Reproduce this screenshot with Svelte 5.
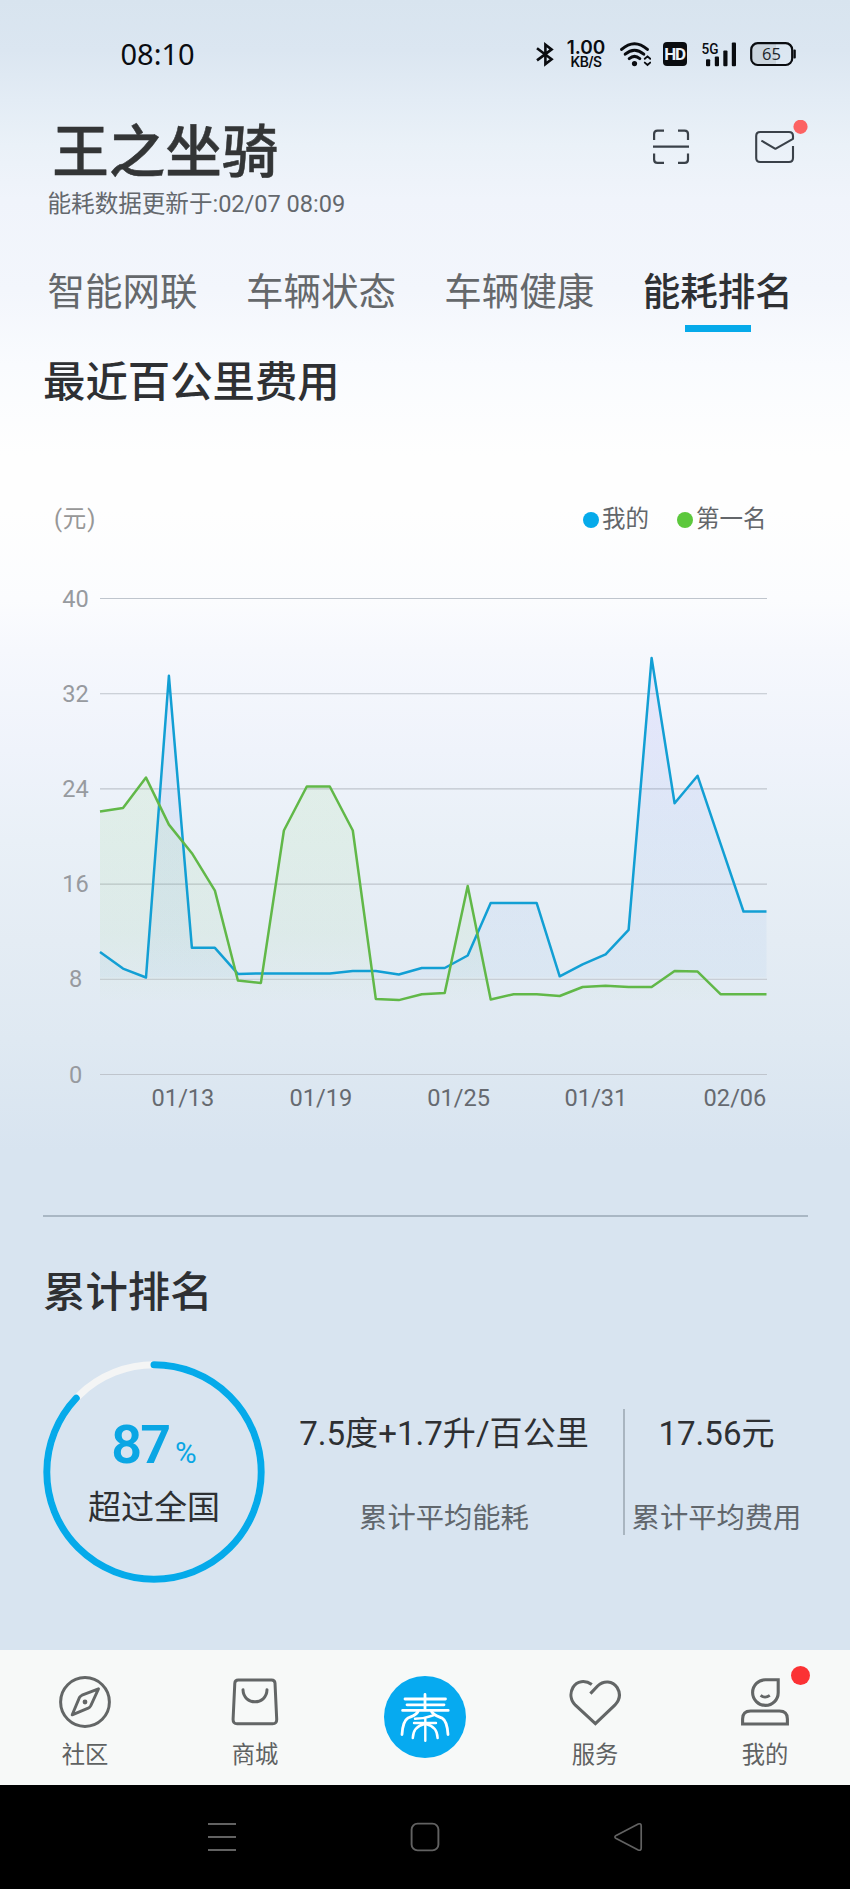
<script>
  const tabs = ['智能网联', '车辆状态', '车辆健康', '能耗排名'];
  const activeTab = '能耗排名';

  const mine = [10.3, 8.9, 8.15, 33.5, 10.65, 10.65, 8.45, 8.5, 8.5, 8.5, 8.5, 8.7, 8.7, 8.4, 8.95, 8.95, 10, 14.4, 14.4, 14.4, 8.25, 9.25, 10.1, 12.15, 35, 22.8, 25.1, 19.4, 13.7, 13.7];
  const best = [22.1, 22.4, 24.95, 21, 18.6, 15.45, 7.9, 7.7, 20.5, 24.2, 24.2, 20.5, 6.35, 6.25, 6.75, 6.85, 15.85, 6.3, 6.75, 6.75, 6.6, 7.35, 7.45, 7.35, 7.35, 8.7, 8.65, 6.75, 6.75, 6.75];

  const left = 100;
  const right = 766.5;
  const zeroY = 540.5;
  const unit = 11.9;
  const px = (i) => left + (i * (right - left)) / 29;
  const py = (v) => zeroY - v * unit;
  const line = (s) => s.map((v, i) => `${i ? 'L' : 'M'}${px(i).toFixed(1)} ${py(v).toFixed(1)}`).join('');
  const area = (s) => {
    const base = py(Math.min(...s)).toFixed(1);
    return `${line(s)}V${base}H${left}Z`;
  };

  const ticks = [40, 32, 24, 16, 8, 0];
  const dates = [
    { label: '01/13', x: 183 },
    { label: '01/19', x: 320.8 },
    { label: '01/25', x: 458.7 },
    { label: '01/31', x: 596 },
    { label: '02/06', x: 735 }
  ];

  const radius = 107.2;
  const percent = 87;
  const circumference = 2 * Math.PI * radius;
</script>

<div class="screen">
  <div class="status">
    <span class="time">08:10</span>
    <div class="sys">
      <svg width="18" height="26" viewBox="0 0 18 26" fill="none" stroke="#0a0c10" stroke-width="2.6" stroke-linejoin="miter">
        <path d="M1 7.2 L15.6 18.2 L9.4 23 V3.6 L15.6 8.4 L1 19.4" />
      </svg>
      <div class="speed"><b>1.00</b><i>KB/S</i></div>
      <svg class="wifi" width="31" height="26" viewBox="0 0 31 26" fill="none" stroke="#0a0c10" stroke-width="3" stroke-linecap="round">
        <path d="M1.6 8.4 Q14.5 -2.8 27.4 8.4" />
        <path d="M5.2 13.2 Q14.5 5.2 23.8 13.2" />
        <path d="M9.2 17.6 Q14.5 13.2 19.8 17.6" />
        <circle cx="14.5" cy="22.6" r="2.6" fill="#0a0c10" stroke="none" />
        <path d="M24.8 17.8 L27.5 15.4 L30.2 17.8 M24.8 21.6 L27.5 24 L30.2 21.6" stroke-width="1.9" />
      </svg>
      <span class="hd">HD</span>
      <svg class="signal" width="34" height="26" viewBox="0 0 34 26" fill="#0a0c10">
        <text x="-0.5" y="12.8" font-size="15.5" font-weight="500" textLength="17" lengthAdjust="spacingAndGlyphs">5G</text>
        <rect x="4" y="18.3" width="4.2" height="6.9" rx="1" />
        <rect x="12.8" y="15.4" width="4.2" height="9.8" rx="1" />
        <rect x="21.3" y="9.6" width="4.2" height="15.6" rx="1" />
        <rect x="29.8" y="1.4" width="4.2" height="23.8" rx="1" />
      </svg>
      <svg class="battery" width="46" height="26" viewBox="0 0 46 26">
        <path d="M9 2 H26 V24 H9 A7 7 0 0 1 2 17 V9 A7 7 0 0 1 9 2Z" fill="#cbd5de" />
        <rect x="1.2" y="2.2" width="41" height="21.8" rx="6.5" fill="none" stroke="#0a0c10" stroke-width="2.2" />
        <rect x="43.4" y="8.6" width="2.4" height="9" rx="1" fill="#0a0c10" />
        <text x="21.5" y="19" font-size="16.5" text-anchor="middle" fill="#20252b">65</text>
      </svg>
    </div>
  </div>

  <header>
    <div class="names">
      <h1>王之坐骑</h1>
      <p>能耗数据更新于:02/07 08:09</p>
    </div>
    <div class="actions">
      <svg width="38" height="38" viewBox="0 0 38 38" fill="none" stroke="#3a4149" stroke-width="2.2">
        <path d="M2.1 12 V6 Q2.1 2.6 5.5 2.6 H12 M26 2.6 H32.6 Q36 2.6 36 6 V12 M36 25.4 V31.4 Q36 34.8 32.6 34.8 H26 M12 34.8 H5.5 Q2.1 34.8 2.1 31.4 V25.4 M1 18.6 H37" />
      </svg>
      <svg width="54" height="46" viewBox="0 0 54 46" fill="none" stroke="#3a4149" stroke-width="2.1" stroke-linejoin="round">
        <path d="M38 26 V38 Q38 42 34 42 H5.2 Q1.2 42 1.2 38 V16 Q1.2 12 5.2 12 H34 Q38 12 38 16 V18.8 L20.4 28.8 L6.4 20.6" />
        <circle cx="45.5" cy="6.8" r="7.1" fill="#fc6262" stroke="none" />
      </svg>
    </div>
  </header>

  <nav class="tabs">
    {#each tabs as tab}
      <div class="tab" class:active={tab === activeTab}>{tab}</div>
    {/each}
  </nav>

  <section class="cost">
    <h2>最近百公里费用</h2>
    <div class="legend">
      <span class="unit">(元)</span>
      <span class="key"><i class="blue"></i>我的</span>
      <span class="key"><i class="green"></i>第一名</span>
    </div>
    <svg class="chart" width="850" height="600" viewBox="0 0 850 600">
      <defs>
        <linearGradient id="fillMine" x1="0" y1="0" x2="0" y2="1">
          <stop offset="0" stop-color="#6a50f0" stop-opacity="0.1" />
          <stop offset="0.5" stop-color="#3f6ee0" stop-opacity="0.08" />
          <stop offset="1" stop-color="#3f8ee0" stop-opacity="0.05" />
        </linearGradient>
        <linearGradient id="fillBest" x1="0" y1="0" x2="0" y2="1">
          <stop offset="0" stop-color="#66c840" stop-opacity="0.09" />
          <stop offset="0.7" stop-color="#66c840" stop-opacity="0.06" />
          <stop offset="1" stop-color="#66c840" stop-opacity="0.01" />
        </linearGradient>
      </defs>
      {#each ticks as tick}
        <line x1={left} x2={right + 0.5} y1={py(tick)} y2={py(tick)} stroke="#bfc5cd" stroke-width="1.1" />
        <text x="75.6" y={py(tick) + 8} fill="#979a9f">{tick}</text>
      {/each}
      {#each dates as d}
        <text x={d.x} y="571.6" fill="#666a70">{d.label}</text>
      {/each}
      <path d={area(mine)} fill="url(#fillMine)" />
      <path d={area(best)} fill="url(#fillBest)" />
      <path d={line(mine)} class="stroke" stroke="#129fd4" />
      <path d={line(best)} class="stroke" stroke="#61b848" />
    </svg>
  </section>

  <section class="rank">
    <h2>累计排名</h2>
    <div class="stats">
      <div class="ring">
        <svg width="222" height="222" viewBox="-111 -111 222 222" fill="none" stroke-width="7">
          <circle r={radius} stroke="#f4f5f5" />
          <circle r={radius} stroke="#05aaea" stroke-linecap="round" transform="rotate(-90)" stroke-dasharray="{(circumference * percent) / 100} {circumference}" />
        </svg>
        <div class="score">
          <div class="pct"><strong>{percent}</strong><span>%</span></div>
          <div class="over">超过全国</div>
        </div>
      </div>
      <div class="stat energy">
        <div class="value">7.5度+1.7升/百公里</div>
        <div class="label">累计平均能耗</div>
      </div>
      <div class="stat fee">
        <div class="value">17.56元</div>
        <div class="label">累计平均费用</div>
      </div>
    </div>
  </section>

  <nav class="bottom">
    <div class="item">
      <svg width="54" height="54" viewBox="0 0 54 54" fill="none" stroke="#636666" stroke-width="3">
        <circle cx="27" cy="27" r="24.4" />
        <path d="M40.5 13.8 L24 20.2 Q22.4 21 21.4 22.6 L14.2 39.8 L30.2 33.2 Q31.8 32.4 32.8 30.6 Z" stroke-linejoin="round" stroke-width="2.9" />
        <circle cx="27" cy="27" r="2.4" fill="#636666" stroke="none" />
      </svg>
      <span>社区</span>
    </div>
    <div class="item">
      <svg width="54" height="54" viewBox="0 0 54 54" fill="none" stroke="#636666" stroke-width="3" stroke-linecap="round">
        <path d="M10.2 5 H43.6 Q46.8 5 47 8.2 L48.7 44 Q48.9 48.8 44.6 48.8 H9.2 Q4.9 48.8 5.1 44 L6.8 8.2 Q7 5 10.2 5Z" />
        <path d="M15 14.8 C15.4 30.8 38.6 30.8 39 14.8" />
      </svg>
      <span>商城</span>
    </div>
    <div class="item main">
      <svg width="82" height="82" viewBox="0 0 82 82" fill="none" stroke="#fff" stroke-width="2.8" stroke-linecap="round" stroke-linejoin="round">
        <circle cx="41" cy="41" r="41" fill="#06aaf0" stroke="none" />
        <path d="M21 23 H61.5 M23 28.8 H60 M18.6 34.4 H64.2 M41 18.4 V34" />
        <path d="M34 35.5 C32 39.5 28.5 40 24 42 Q18.8 45 18 58.5 M47.5 35.5 C50 39.5 53.5 40 58 42 Q63.2 45 64 58.5" />
        <path d="M50 39.2 Q41 42.6 31 42.8 M30 47 H52 M41.3 42 V64.8" stroke-width="2.4" />
        <path d="M40.5 48 Q29.2 50.5 28.8 62 M42 48 Q53.2 50.5 53.6 62" stroke-width="2.5" />
      </svg>
    </div>
    <div class="item">
      <svg width="54" height="54" viewBox="0 0 54 54" fill="none" stroke="#636666" stroke-width="3.1">
        <path d="M23.8 9.6 C17 4.6 8.8 6 5 12.4 C1.6 18.4 2.6 25.2 7.4 30.2 L27.4 48.6 L46.8 30.2 C51.8 24.8 52.6 18.2 49.2 12.6 C44.6 5.6 35.6 5.2 29.6 11 L22.4 18.6" stroke-linejoin="miter" />
      </svg>
      <span>服务</span>
    </div>
    <div class="item">
      <svg width="54" height="54" viewBox="0 0 54 54" fill="none" stroke="#636666" stroke-width="3.1">
        <path d="M27.6 4.8 H40.2 V17.4 A12.8 12.8 0 1 1 27.6 4.8Z" />
        <path d="M22.6 20.4 Q27 23.8 31.8 20.4" stroke-width="2.8" />
        <path d="M4.6 49 V44 Q4.6 36 12.6 36 H41.4 Q49.4 36 49.4 44 V49 Z" />
      </svg>
      <em></em>
      <span>我的</span>
    </div>
  </nav>

  <div class="keys">
    <svg width="30" height="30" viewBox="0 0 30 30" stroke="#626262" stroke-width="2.2"><path d="M1 2 H29 M1 15 H29 M1 28 H29" /></svg>
    <svg width="30" height="30" viewBox="0 0 30 30" fill="none" stroke="#626262" stroke-width="1.9"><rect x="1.6" y="1.6" width="26.8" height="26.8" rx="6" /></svg>
    <svg width="30" height="30" viewBox="0 0 30 30" fill="none" stroke="#626262" stroke-width="1.7"><path d="M3.2 13.4 L25.2 2 Q28.2 1 28.2 4 V26 Q28.2 29 25.2 28 L3.2 16.6 Q0.6 15 3.2 13.4Z" /></svg>
  </div>
</div>

<style>
  :global(body) {
    margin: 0;
  }
  .screen {
    width: 850px;
    height: 1889px;
    overflow: hidden;
    display: flex;
    flex-direction: column;
    font-family: Roboto, 'Noto Sans CJK SC', sans-serif;
    color: #2e3033;
    background: linear-gradient(
      #d8e4ef 0,
      #dbe6f1 50px,
      #e3ecf5 100px,
      #eaf1f8 145px,
      #f0f4fb 200px,
      #f3f6fc 290px,
      #f9fbfe 365px,
      #fefefe 455px,
      #fefefe 510px,
      #fbfcfe 600px,
      #f6f8fd 650px,
      #eff3fb 750px,
      #e9f0f7 840px,
      #e4ecf4 940px,
      #dfe9f2 1040px,
      #d8e4f0 1150px,
      #d8e4f0 100%
    );
  }
  svg {
    display: block;
    flex: none;
  }
  h1,
  h2,
  p {
    margin: 0;
  }
  i,
  b {
    font-style: normal;
  }
  .status {
    height: 108px;
    box-sizing: border-box;
    padding: 0 54px 0 120.5px;
    display: flex;
    align-items: center;
    justify-content: space-between;
    color: #0a0c10;
  }
  .time {
    font: 29px/34px 'Noto Sans', sans-serif;
  }
  .sys {
    display: flex;
    align-items: center;
  }
  .speed {
    width: 38px;
    margin: 0 15px 0 13px;
    display: flex;
    flex-direction: column;
    align-items: center;
  }
  .speed b {
    font: 600 19px/15px Inter, sans-serif;
  }
  .speed i {
    font: 600 13.8px/14px Inter, sans-serif;
    letter-spacing: -0.5px;
  }
  .hd {
    width: 24px;
    height: 24px;
    margin: 0 15px 0 12px;
    border-radius: 4px;
    background: #0a0c10;
    color: #eef3f8;
    font-size: 17px;
    font-weight: 700;
    line-height: 24.5px;
    text-align: center;
    letter-spacing: -1.2px;
    text-indent: -1px;
  }
  .signal {
    margin-right: 14px;
  }
  .battery text {
    font-family: 'Open Sans', sans-serif;
  }
  header {
    height: 164px;
    box-sizing: border-box;
    padding: 17px 41px 0 47.5px;
    display: flex;
    justify-content: space-between;
  }
  h1 {
    padding-left: 4.8px;
    font-size: 56.5px;
    font-weight: 500;
    line-height: 56px;
    color: #333536;
    -webkit-text-stroke: 0.5px #333536;
  }
  header p {
    margin-top: 8.5px;
    font-size: 23.6px;
    letter-spacing: -0.03px;
    line-height: 28px;
    color: #64686d;
  }
  .actions {
    display: flex;
    gap: 65.5px;
  }
  .actions svg:first-child {
    margin-top: 3px;
  }
  .actions svg:last-child {
    margin-top: -5px;
  }
  .tabs {
    display: flex;
    gap: 48.2px;
    padding-left: 47.6px;
    height: 86px;
  }
  .tab {
    width: 150.2px;
    font-size: 37.5px;
    line-height: 40px;
    color: #65686b;
    white-space: nowrap;
  }
  .tab.active {
    font-weight: 500;
    color: #2e3033;
  }
  .tab.active::after {
    content: '';
    display: block;
    width: 66px;
    height: 7px;
    margin: 13px auto 0;
    background: #06aaea;
  }
  h2 {
    font-size: 42.4px;
    font-weight: 500;
    line-height: 50px;
    color: #2e3033;
  }
  .cost {
    height: 857px;
  }
  .cost h2 {
    padding-left: 43px;
  }
  .legend {
    margin-top: 96px;
    height: 30px;
    padding: 0 83.5px 0 54px;
    display: flex;
    align-items: center;
    gap: 28px;
    font-size: 23.5px;
    line-height: 30px;
    color: #63666a;
  }
  .unit {
    margin-right: auto;
    color: #979797;
    letter-spacing: 0.8px;
  }
  .key {
    display: flex;
    align-items: center;
    gap: 3px;
  }
  .key i {
    width: 16px;
    height: 16px;
    margin-top: 1px;
    border-radius: 50%;
  }
  .blue {
    background: #06aaea;
  }
  .green {
    background: #5cc83c;
  }
  .chart text {
    font-size: 23.6px;
    text-anchor: middle;
  }
  .stroke {
    fill: none;
    stroke-width: 2.5;
    stroke-linejoin: round;
  }
  .rank {
    height: 435px;
    box-sizing: border-box;
    margin: 0 42px 0 43px;
    border-top: 2px solid #a9b7c4;
  }
  .rank h2 {
    margin-top: 51px;
  }
  .stats {
    margin-top: 42.5px;
    display: flex;
    align-items: center;
  }
  .ring {
    width: 222px;
    height: 222px;
    display: grid;
    place-items: center;
  }
  .ring > * {
    grid-area: 1 / 1;
  }
  .score {
    display: flex;
    flex-direction: column;
    align-items: center;
  }
  .pct {
    display: flex;
    align-items: baseline;
    gap: 6px;
    color: #0aa6e4;
    line-height: 60px;
  }
  .pct strong {
    font-size: 54px;
    font-weight: 600;
    letter-spacing: -2px;
  }
  .pct span {
    font-size: 29.5px;
  }
  .over {
    margin-top: 5px;
    font-size: 33px;
    line-height: 40px;
  }
  .stat {
    height: 126px;
    display: flex;
    flex-direction: column;
    align-items: center;
    justify-content: space-between;
    box-sizing: border-box;
    padding: 5px 0 0;
    white-space: nowrap;
  }
  .energy {
    width: 360px;
    border-right: 2px solid #a9b5c0;
  }
  .fee {
    width: 183px;
  }
  .value {
    font-size: 33.1px;
    line-height: 40px;
  }
  .label {
    font-size: 28.3px;
    line-height: 33px;
    color: #61676d;
  }
  .bottom {
    height: 135px;
    display: flex;
    background: #f7f9f8;
  }
  .item {
    position: relative;
    width: 170px;
    box-sizing: border-box;
    padding-top: 24.5px;
    display: flex;
    flex-direction: column;
    align-items: center;
  }
  .item span {
    margin-top: 11px;
    font-size: 23.3px;
    line-height: 30px;
    color: #5f6262;
  }
  .item em {
    position: absolute;
    left: 111px;
    top: 16px;
    width: 19px;
    height: 19px;
    border-radius: 50%;
    background: #fb3234;
  }
  .main {
    padding-top: 26px;
  }
  .keys {
    flex: 1;
    padding: 37px 207px 0;
    display: flex;
    justify-content: space-between;
    background: #000;
  }
</style>
